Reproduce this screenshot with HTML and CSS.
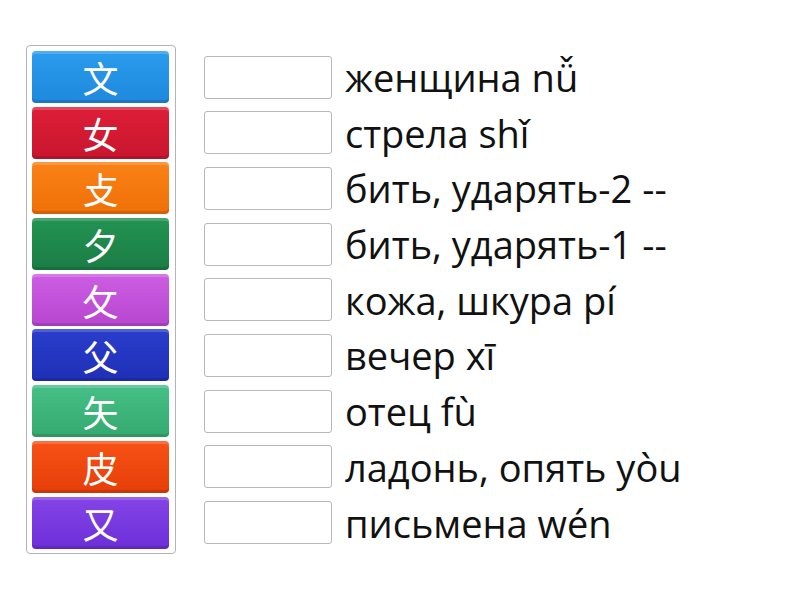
FILE: index.html
```html
<!DOCTYPE html>
<html>
<head>
<meta charset="utf-8">
<link rel="stylesheet" href="styles.css">
</head>
<body>
<div class="page">
  <div class="panel">
    <div class="tile c1">文</div>
    <div class="tile c2">女</div>
    <div class="tile c3">攴</div>
    <div class="tile c4">夕</div>
    <div class="tile c5">攵</div>
    <div class="tile c6">父</div>
    <div class="tile c7">矢</div>
    <div class="tile c8">皮</div>
    <div class="tile c9">又</div>
  </div>
  <div class="list">
    <div class="row"><div class="slot"></div><span class="label">женщина nǚ</span></div>
    <div class="row"><div class="slot"></div><span class="label">стрела shǐ</span></div>
    <div class="row"><div class="slot"></div><span class="label">бить, ударять-2 --</span></div>
    <div class="row"><div class="slot"></div><span class="label">бить, ударять-1 --</span></div>
    <div class="row"><div class="slot"></div><span class="label">кожа, шкура pí</span></div>
    <div class="row"><div class="slot"></div><span class="label">вечер xī</span></div>
    <div class="row"><div class="slot"></div><span class="label">отец fù</span></div>
    <div class="row"><div class="slot"></div><span class="label">ладонь, опять yòu</span></div>
    <div class="row"><div class="slot"></div><span class="label">письмена wén</span></div>
  </div>
</div>
</body>
</html>
```
FILE: styles.css
```css
html, body {
  margin: 0;
  padding: 0;
  background: #ffffff;
}
.page {
  display: flex;
  align-items: flex-start;
  padding: 45px 0 0 26px;
  font-family: "Open Sans", "Noto Sans", sans-serif;
}
.panel {
  display: flex;
  flex-direction: column;
  gap: 3.7px;
  padding: 5px 6px 4.4px 5px;
  border: 1px solid #b4b4b4;
  border-radius: 4px;
}
.tile {
  width: 137px;
  height: 52px;
  border-radius: 4px;
  display: flex;
  align-items: center;
  justify-content: center;
  color: #ffffff;
  font-family: "Noto Sans CJK SC", "Noto Sans CJK JP", sans-serif;
  font-size: 36px;
  font-weight: 400;
  line-height: 1;
  box-shadow: inset 0 3px 0 rgba(255,255,255,0.18), inset 0 -3px 0 rgba(0,0,0,0.12);
}
.c1 { background: linear-gradient(#2a9cee, #1e88dc); }
.c2 { background: linear-gradient(#de1e38, #c8162e); }
.c3 { background: linear-gradient(#fa8216, #ef7008); }
.c4 { background: linear-gradient(#229352, #1b7d44); }
.c5 { background: linear-gradient(#cc5ee2, #b846d0); }
.c6 { background: linear-gradient(#2a3ecc, #1f2fb6); }
.c7 { background: linear-gradient(#45c086, #35a970); }
.c8 { background: linear-gradient(#f85216, #e63e08); }
.c9 { background: linear-gradient(#8444e6, #6c2ed8); }
.list {
  display: flex;
  flex-direction: column;
  gap: 3.7px;
  padding-top: 6px;
  margin-left: 28px;
}
.row {
  height: 52px;
  display: flex;
  align-items: center;
}
.slot {
  width: 126px;
  height: 41px;
  border: 1px solid #b8b8b8;
  border-radius: 3px;
  background: #ffffff;
  box-sizing: content-box;
  flex: none;
}
.label {
  margin-left: 13px;
  font-size: 38px;
  color: #111111;
  white-space: nowrap;
  line-height: 1;
}
```
